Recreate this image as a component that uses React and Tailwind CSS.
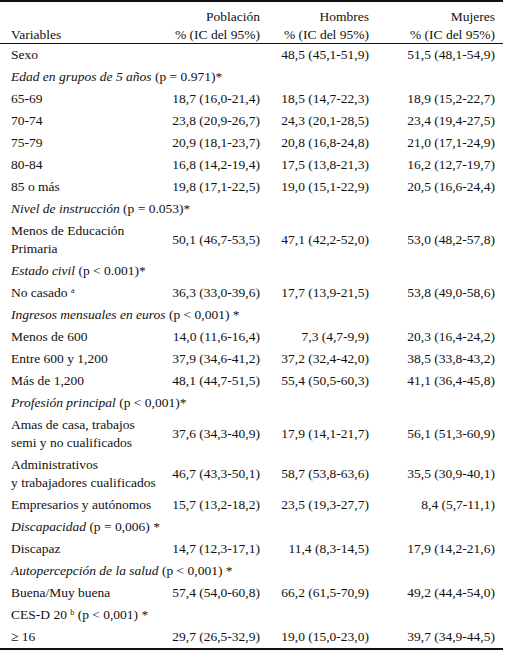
const cols = "grid grid-cols-[172px_94px_109px_128px]";

const rows = [
  { label: "Sexo", v: ["", "48,5 (45,1-51,9)", "51,5 (48,1-54,9)"] },
  { group: "Edad en grupos de 5 años", p: "(p = 0.971)*" },
  { label: "65-69", v: ["18,7 (16,0-21,4)", "18,5 (14,7-22,3)", "18,9 (15,2-22,7)"] },
  { label: "70-74", v: ["23,8 (20,9-26,7)", "24,3 (20,1-28,5)", "23,4 (19,4-27,5)"] },
  { label: "75-79", v: ["20,9 (18,1-23,7)", "20,8 (16,8-24,8)", "21,0 (17,1-24,9)"] },
  { label: "80-84", v: ["16,8 (14,2-19,4)", "17,5 (13,8-21,3)", "16,2 (12,7-19,7)"] },
  { label: "85 o más", v: ["19,8 (17,1-22,5)", "19,0 (15,1-22,9)", "20,5 (16,6-24,4)"] },
  { group: "Nivel de instrucción", p: "(p = 0.053)*" },
  { label: ["Menos de Educación", "Primaria"], v: ["50,1 (46,7-53,5)", "47,1 (42,2-52,0)", "53,0 (48,2-57,8)"] },
  { group: "Estado civil", p: "(p < 0.001)*" },
  { label: "No casado", sup: "a", v: ["36,3 (33,0-39,6)", "17,7 (13,9-21,5)", "53,8 (49,0-58,6)"] },
  { group: "Ingresos mensuales en euros", p: "(p < 0,001) *" },
  { label: "Menos de 600", v: ["14,0 (11,6-16,4)", "7,3 (4,7-9,9)", "20,3 (16,4-24,2)"] },
  { label: "Entre 600 y 1,200", v: ["37,9 (34,6-41,2)", "37,2 (32,4-42,0)", "38,5 (33,8-43,2)"] },
  { label: "Más de 1,200", v: ["48,1 (44,7-51,5)", "55,4 (50,5-60,3)", "41,1 (36,4-45,8)"] },
  { group: "Profesión principal", p: "(p < 0,001)*" },
  { label: ["Amas de casa, trabajos", "semi y no cualificados"], v: ["37,6 (34,3-40,9)", "17,9 (14,1-21,7)", "56,1 (51,3-60,9)"] },
  { label: ["Administrativos", "y trabajadores cualificados"], v: ["46,7 (43,3-50,1)", "58,7 (53,8-63,6)", "35,5 (30,9-40,1)"] },
  { label: "Empresarios y autónomos", v: ["15,7 (13,2-18,2)", "23,5 (19,3-27,7)", "8,4 (5,7-11,1)"] },
  { group: "Discapacidad", p: "(p = 0,006) *" },
  { label: "Discapaz", v: ["14,7 (12,3-17,1)", "11,4 (8,3-14,5)", "17,9 (14,2-21,6)"] },
  { group: "Autopercepción de la salud", p: "(p < 0,001) *" },
  { label: "Buena/Muy buena", v: ["57,4 (54,0-60,8)", "66,2 (61,5-70,9)", "49,2 (44,4-54,0)"] },
  { label: "CES-D 20", sup: "b", after: "(p < 0,001) *", span: true },
  { label: "≥ 16", v: ["29,7 (26,5-32,9)", "19,0 (15,0-23,0)", "39,7 (34,9-44,5)"] },
];

function Row({ r }) {
  if (r.group) {
    return (
      <div className="py-[2px] pl-[11px] leading-[18px] whitespace-nowrap">
        <i>{r.group}</i> {r.p}
      </div>
    );
  }
  if (r.span) {
    return (
      <div className="py-[2px] pl-[11px] leading-[18px] whitespace-nowrap">
        {r.label} <sup className="text-[8px]">{r.sup}</sup> {r.after}
      </div>
    );
  }
  const multi = Array.isArray(r.label);
  return (
    <div className={`${cols} items-center py-[2px] leading-[18px]`}>
      <div className="pl-[11px] whitespace-nowrap">
        {multi ? (
          <>
            {r.label[0]}
            <br />
            {r.label[1]}
          </>
        ) : (
          <>
            {r.label}
            {r.sup && (
              <>
                {" "}
                <sup className="text-[8px]">{r.sup}</sup>
              </>
            )}
          </>
        )}
      </div>
      <div className="text-right pr-[6px] whitespace-nowrap">{r.v[0]}</div>
      <div className="text-right pr-[6px] whitespace-nowrap">{r.v[1]}</div>
      <div className="text-right pr-[8px] whitespace-nowrap">{r.v[2]}</div>
    </div>
  );
}

export default function App() {
  return (
    <div className="w-[506px] h-[650px] bg-white text-[#111] text-[13.5px] font-['Liberation_Serif','Times_New_Roman',serif]">
      <div className="w-[503px] border-t-2 border-b-2 border-[#111]">
        <div className="border-b border-[#111]">
          <div className={`${cols} h-[24px] items-end leading-[18px]`}>
            <div />
            <div className="text-right pr-[6px]">Población</div>
            <div className="text-right pr-[6px]">Hombres</div>
            <div className="text-right pr-[8px]">Mujeres</div>
          </div>
          <div className={`${cols} h-[17px] items-center leading-[17px]`}>
            <div className="pl-[11px]">Variables</div>
            <div className="text-right pr-[6px] whitespace-nowrap">% (IC del 95%)</div>
            <div className="text-right pr-[6px] whitespace-nowrap">% (IC del 95%)</div>
            <div className="text-right pr-[8px] whitespace-nowrap">% (IC del 95%)</div>
          </div>
        </div>
        {rows.map((r, i) => (
          <Row key={i} r={r} />
        ))}
      </div>
    </div>
  );
}
